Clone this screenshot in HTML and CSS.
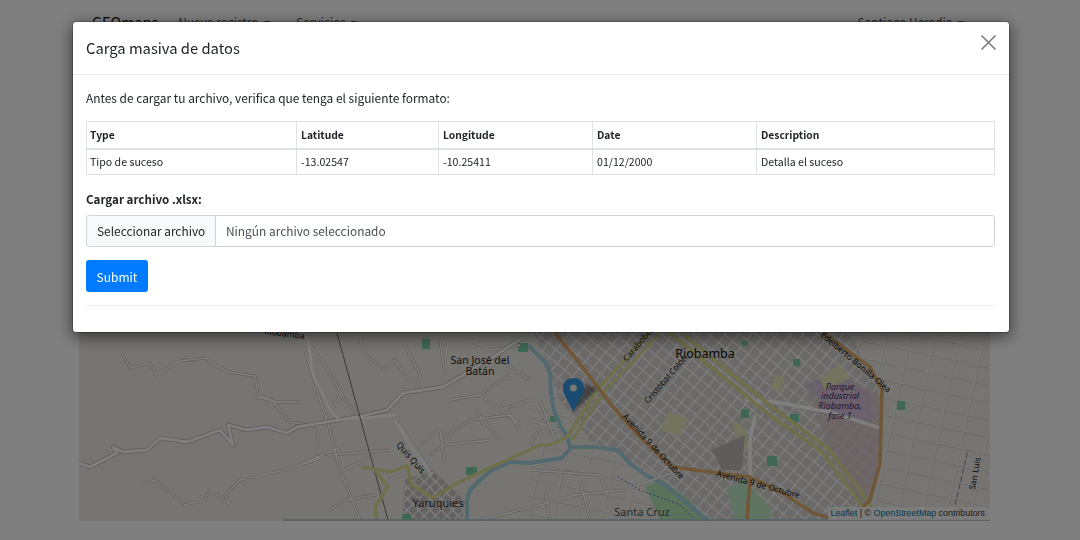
FILE: index.html
```html
<!DOCTYPE html>
<html lang="es">

<head>
  <meta charset="UTF-8" />
  <title>GEOmaps</title>
  <link rel="stylesheet" href="styles.css">
</head>

<body>

  <nav class="navbar">
    <a class="brand">GEOmaps</a>
    <a class="nav-link">Nuevo registro <i class="caret"></i></a>
    <a class="nav-link">Servicios <i class="caret"></i></a>
    <a class="nav-link nav-user">Santiago Heredia <i class="caret"></i></a>
  </nav>

  <main class="page">
    <div class="map">
      <svg class="map-svg" viewBox="79 44 911 477" width="911" height="477" xmlns="http://www.w3.org/2000/svg">
        <defs>
          <pattern id="city" width="10" height="10" patternUnits="userSpaceOnUse" patternTransform="rotate(40)">
            <rect width="10" height="10" fill="#d6d4d0" />
            <path d="M0 0H10M0 0V10" stroke="#fff" stroke-width="2.200" />
          </pattern>
          <pattern id="town" width="8" height="8" patternUnits="userSpaceOnUse" patternTransform="rotate(45)">
            <rect width="8" height="8" fill="#c6c4c1" />
            <path d="M0 0H8M0 0V8" stroke="#fff" stroke-width="2.400" />
          </pattern>
          <pattern id="suburb" width="24" height="17" patternUnits="userSpaceOnUse" patternTransform="rotate(12)">
            <path d="M0 0H24M0 0V17" stroke="#c8c6c1" stroke-width="2.800" fill="none" />
            <path d="M0 0H24M0 0V17" stroke="#fff" stroke-width="1.600" fill="none" />
          </pattern>
          <g id="minor">
            <path d="M122 353L130 368L150 363L156 375L180 361L205 358L228 372L255 376L258 395L275 402L300 402" />
            <path d="M255 397L272 400L290 422L320 427" />
            <path d="M346 385L318 432L316 460" />
            <path d="M305 350L320 400L333 440L338 465L360 520" />
            <path d="M310 345L328 370L345 400L362 420" />
            <path d="M393 416L410 440L430 470M420 445L440 430L445 465" />
            <path d="M360 340L365 355L385 370L395 360L412 385" />
            <path d="M390 450L330 455L285 470L240 480L225 495L230 505" />
            <path d="M140 485L155 480L185 505L205 500L210 490L230 505" />
            <path d="M430 455L445 445L490 440M440 440L470 420L510 415L520 425" />
            <path d="M330 510L345 500L375 495L390 480L410 470" />
            <path d="M450 400L480 395L500 410L530 400M475 410L500 440M500 400L520 430" />
            <path d="M480 520L540 505L575 495L625 490L680 470" />
            <path d="M530 470L600 475L610 500L625 520M545 490L550 520M580 480L590 520" />
            <path d="M530 420L560 430M540 400L555 440M530 445L550 410" />
            <path d="M470 340L490 350L520 345M500 360L530 380M510 375L480 395" />
            <path d="M405 345L420 375L415 395M440 340L445 375" />
            <path d="M300 465L345 445M345 470L375 455" />
          </g>
        </defs>

        <rect x="79" y="44" width="911" height="477" fill="#edeae4" />

        <!-- city blocks -->
        <rect x="860" y="333" width="130" height="187" fill="url(#suburb)" />
        <rect x="530" y="395" width="180" height="125" fill="url(#suburb)" />
        <path d="M534 333H850L878 390L880 470L860 520H700L650 470L590 440L560 400Z" fill="url(#city)" />
        <path d="M405 480L432 470L465 500L462 520H402Z" fill="url(#town)" />
        <path d="M805 385L835 372L880 395L880 470L862 510L830 450Z" fill="#d9c6ca" opacity=".75" />
        <path d="M806 385L835 372L870 395L872 425L835 415Z" fill="#d2c2da" opacity=".85" />

        <!-- landuse -->
        <g fill="#7fd0a8">
          <rect x="422" y="339" width="8" height="10" />
          <rect x="466" y="467" width="11" height="8" />
          <rect x="518" y="343" width="10" height="9" />
          <rect x="402" y="514" width="9" height="6" />
          <rect x="741" y="409" width="8" height="9" />
          <rect x="767" y="456" width="10" height="10" />
          <rect x="790" y="414" width="9" height="8" />
          <rect x="897" y="401" width="8" height="9" />
          <rect x="550" y="416" width="6" height="6" />
          <rect x="793" y="359" width="7" height="7" />
          <rect x="742" y="341" width="6" height="5" />
        </g>
        <g fill="#e8e8bc">
          <path d="M668 412L688 418L680 436L660 430Z" />
          <path d="M775 375L785 378L780 392L771 388Z" />
          <path d="M820 378L838 365L850 378L825 390Z" />
          <path d="M732 420L745 428L752 450L738 448Z" />
        </g>
        <path d="M645 486L662 480L690 500L706 520H660Z" fill="#b5e2b5" />
        <path d="M727 488L745 480L772 510L768 520H735Z" fill="#bfe8c4" />
        <path d="M712 450L745 435L742 470L722 470Z" fill="#bdbbb8" />

        <!-- river -->
        <g fill="none" stroke="#a5d2e0" stroke-linejoin="round" stroke-linecap="round">
          <path stroke-width="4" d="M530 347L545 362L550 373L551 392L553 407L560 425L567 437L570 447L595 447L617 450L632 465L643 473L665 485L683 500L707 520" />
          <path stroke-width="4" d="M570 449L562 458L530 463L510 462L490 471L480 480L470 490L467 500L467 517" />
        </g>

        <!-- minor roads -->
        <use href="#minor" fill="none" stroke="#c2c0bb" stroke-width="2.800" stroke-linejoin="round" />
        <use href="#minor" fill="none" stroke="#fff" stroke-width="1.500" stroke-linejoin="round" />
        <g fill="none" stroke="#fff" stroke-width="3.400" stroke-linejoin="round">
          <path d="M745 400L775 402L830 412L880 428" />
          <path d="M755 415L750 440L750 478" />
        </g>

        <!-- main road west -->
        <path d="M79 463L90 467L117 453L113 447L123 452L147 450L160 438L187 442L220 430L233 445L228 425L247 430L267 427L287 433L297 427L357 417L387 410L403 393L443 387L493 357L522 338" fill="none" stroke="#bdbab5" stroke-width="4.400" stroke-linejoin="round" />
        <path d="M79 463L90 467L117 453L113 447L123 452L147 450L160 438L187 442L220 430L233 445L228 425L247 430L267 427L287 433L297 427L357 417L387 410L403 393L443 387L493 357L522 338" fill="none" stroke="#fff" stroke-width="2.800" stroke-linejoin="round" />
        <path d="M308 340L313 375L330 410L340 420L396 415M395 420L410 445L432 475" fill="none" stroke="#fff" stroke-width="2.400" />
        <path d="M337 333L388 520" fill="none" stroke="#555" stroke-width=".8" />

        <!-- yellow roads -->
        <g fill="none" stroke="#dede96" stroke-linejoin="round">
          <path stroke-width="3.400" d="M362 467L390 472L407 466L412 485L433 498L457 483L540 445L550 445L567 437L597 390L650 333" />
          <path stroke-width="3.400" d="M375 470L388 487L375 507L377 520" />
          <path stroke-width="3" d="M660 333L604 392L572 440" />
          <path stroke-width="3.600" d="M670 333L763 410L823 453L863 507" />
          <path stroke-width="3.600" d="M682 333L768 404L830 450L872 507" />
        </g>

        <!-- orange roads -->
        <g fill="none" stroke="#dfae6e" stroke-width="3.600" stroke-linejoin="round">
          <path d="M555 333L577 360L613 407L640 437L673 467L717 473L750 477L783 493L813 513L829 518" />
          <path d="M750 478L747 520" />
          <path d="M823 333L870 367L882 390L880 463L870 500L863 507" />
        </g>

        <path d="M618 477L640 490L680 505L695 520" fill="none" stroke="#2030c0" stroke-width=".8" stroke-dasharray="1.500 2.500" />
        <path d="M955 505L968 450" fill="none" stroke="#a892b8" stroke-width="1.200" stroke-dasharray="6 2" />
        <path d="M283 520H990" stroke="#9cc2d6" stroke-width="1.400" />

        <!-- labels -->
        <g class="lbl">
          <text class="lbl-city" x="705" y="358" text-anchor="middle">Riobamba</text>
          <text class="lbl-town" x="480" y="364" text-anchor="middle">San José del</text>
          <text class="lbl-town" x="480" y="375" text-anchor="middle">Batán</text>
          <text class="lbl-big" x="438" y="507" text-anchor="middle">Yaruquies</text>
          <text class="lbl-big lbl-dim" x="642" y="516" text-anchor="middle">Santa Cruz</text>
          <text class="lbl-road" transform="translate(264 334) rotate(7)">Riobamba</text>
          <text class="lbl-road" transform="translate(396 445) rotate(49)">Quis Quis</text>
          <text class="lbl-road" transform="translate(627 362) rotate(-50)">Carabobo</text>
          <text class="lbl-road" transform="translate(648 404) rotate(-49)">Cristóbal Colón</text>
          <text class="lbl-road" transform="translate(622 417) rotate(47)">Avenida 9 de Octubre</text>
          <text class="lbl-road" transform="translate(716 476) rotate(15)">Avenida 9 de Octubre</text>
          <text class="lbl-road" transform="translate(820 336) rotate(40)">Edelberto Bonilla Olea</text>
          <text class="lbl-road" transform="translate(975 490) rotate(-80)">San Luis</text>
          <g class="lbl-park">
            <text x="840" y="390" text-anchor="middle">Parque</text>
            <text x="840" y="399" text-anchor="middle">industrial</text>
            <text x="840" y="409" text-anchor="middle">Riobamba,</text>
            <text x="840" y="419" text-anchor="middle">fase 1</text>
          </g>
        </g>

        <!-- marker -->
        <path class="marker-shadow" d="M573 412L597 389L587 384L576 396Z" />
        <path d="M573 412C570 403 563 396 563 388C563 382 567 378 573.500 378C580 378 584 382 584 388C584 396 577 403 573 412Z" fill="#3399e0" />
        <circle cx="573.500" cy="388" r="3.500" fill="#eee" />
      </svg>
      <div class="attribution"><a>Leaflet</a> | © <a>OpenStreetMap</a> contributors</div>
    </div>
  </main>

  <div class="backdrop"></div>

  <div class="modal">
    <div class="modal-content">
      <div class="modal-header">
        <h5>Carga masiva de datos</h5>
        <svg class="close" viewBox="0 0 15 15" width="15" height="15" xmlns="http://www.w3.org/2000/svg">
          <path d="M.5 .5L14.500 14.500M14.500 .5L.5 14.500" fill="none" stroke="#777" stroke-width="1.500" />
        </svg>
      </div>
      <div class="modal-body">
        <p class="intro">Antes de cargar tu archivo, verifica que tenga el siguiente formato:</p>
        <table class="format-table">
          <colgroup>
            <col class="col-type">
            <col class="col-lat">
            <col class="col-lng">
            <col class="col-date">
            <col>
          </colgroup>
          <thead>
            <tr>
              <th>Type</th>
              <th>Latitude</th>
              <th>Longitude</th>
              <th>Date</th>
              <th>Description</th>
            </tr>
          </thead>
          <tbody>
            <tr>
              <td>Tipo de suceso</td>
              <td>-13.02547</td>
              <td>-10.25411</td>
              <td>01/12/2000</td>
              <td>Detalla el suceso</td>
            </tr>
          </tbody>
        </table>
        <label class="file-label">Cargar archivo .xlsx:</label>
        <div class="file-input">
          <span class="file-button">Seleccionar archivo</span>
          <span class="file-name">Ningún archivo seleccionado</span>
        </div>
        <button type="button" class="btn-submit">Submit</button>
        <hr class="rule">
      </div>
    </div>
  </div>

</body>

</html>
```

FILE: styles.css
```css
* {
    box-sizing: border-box;
}
html, body {
    margin: 0;
    padding: 0;
    height: 540px;
    overflow: hidden;
}
body {
    background: #fff;
    color: #212529;
    font-family: "Noto Sans CJK JP", "Noto Sans", sans-serif;
    font-size: 12px;
}
.navbar {
    height: 44px;
    padding: 0 116px 0 92px;
    display: flex;
    align-items: center;
    gap: 26px;
    line-height: 20px;
}
.navbar .brand {
    margin-right: -6px;
    font-size: 14.400px;
    color: #111;
}
.nav-link {
    color: #555;
    font-size: 11.800px;
}
.nav-user {
    margin-left: auto;
}
.caret {
    display: inline-block;
    margin-left: 3px;
    vertical-align: 2px;
    border-top: 4px solid #555;
    border-left: 3.500px solid transparent;
    border-right: 3.500px solid transparent;
}
.page {
    padding: 0 90px 0 79px;
}
.map {
    position: relative;
    width: 911px;
}
.map-svg {
    display: block;
}
.marker-shadow {
    fill: #000;
    opacity: 0.4;
    filter: blur(1.500px);
}
.lbl text {
    font-family: "Noto Sans", sans-serif;
    fill: #333;
}
.lbl .lbl-city {
    font-size: 12.500px;
    fill: #111;
}
.lbl .lbl-town {
    font-size: 10.500px;
    fill: #222;
}
.lbl .lbl-big {
    font-size: 11px;
    fill: #333;
}
.lbl .lbl-dim {
    fill: #555;
}
.lbl .lbl-road {
    font-size: 8.500px;
    fill: #111;
}
.lbl-park text {
    font-size: 9px;
    font-style: italic;
    fill: #4a2a66;
}
.attribution {
    position: absolute;
    right: 0;
    bottom: 1px;
    padding: 0 5px 0 3px;
    height: 13px;
    background: rgba(255, 255, 255, 0.7);
    color: #333;
    font-family: "Liberation Sans", Arial, sans-serif;
    font-size: 8.900px;
    line-height: 13px;
    white-space: nowrap;
}
.attribution a {
    color: #0078a8;
}
.backdrop {
    position: fixed;
    top: 0;
    left: 0;
    width: 100%;
    height: 100%;
    background: rgba(0, 0, 0, 0.5);
}
.modal {
    position: fixed;
    top: 21px;
    left: 72px;
    width: 938px;
}
.modal-content {
    height: 312px;
    background: #fff;
    border: 1px solid rgba(0, 0, 0, 0.2);
    border-radius: 4px;
    box-shadow: 0 4px 16px rgba(0, 0, 0, 0.55);
    background-clip: padding-box;
}
.modal-header {
    height: 53px;
    padding: 0 13px;
    display: flex;
    justify-content: space-between;
    border-bottom: 1px solid #e9ecef;
}
.modal-header h5 {
    margin: 15px 0 0;
    font-size: 14.750px;
    font-weight: 400;
    line-height: 21px;
}
.close {
    margin-top: 13px;
}
.modal-body {
    padding: 0 14px 0 13px;
}
.intro {
    margin: 0;
    padding-top: 13px;
    font-size: 11.900px;
    line-height: 20px;
}
.format-table {
    margin-top: 13px;
    width: 909px;
    table-layout: fixed;
    border-collapse: collapse;
    font-size: 10.600px;
}
.col-type {
    width: 210px;
}
.col-lat {
    width: 142px;
}
.col-lng {
    width: 154px;
}
.col-date {
    width: 164px;
}
.format-table th, .format-table td {
    padding: 0 3px;
    border: 1px solid #dee2e6;
    text-align: left;
    line-height: 16px;
}
.format-table th + th, .format-table td + td {
    padding-left: 4px;
}
.format-table th {
    height: 27px;
    border-bottom-width: 2px;
    font-size: 10.300px;
    font-weight: 700;
}
.format-table td {
    height: 26px;
}
.file-label {
    display: block;
    margin-top: 15px;
    font-size: 11.600px;
    font-weight: 700;
    line-height: 18px;
}
.file-input {
    margin-top: 7px;
    height: 32px;
    display: flex;
    border: 1px solid #ced4da;
    border-radius: 3px;
    font-size: 11.900px;
    line-height: 30px;
    white-space: nowrap;
}
.file-button {
    width: 129px;
    padding-left: 10px;
    background: #f8f9fa;
    border-right: 1px solid #ced4da;
    border-radius: 3px 0 0 3px;
}
.file-name {
    padding-left: 10px;
    color: #495057;
}
.btn-submit {
    display: block;
    margin: 13px 0 0;
    padding: 0;
    width: 62px;
    height: 32px;
    border: 0;
    border-radius: 3px;
    background: #007bff;
    color: #fff;
    font-family: inherit;
    font-size: 12px;
}
.rule {
    margin: 13px 0 0;
    border: 0;
    border-top: 1px solid #f1f1f1;
}
```
